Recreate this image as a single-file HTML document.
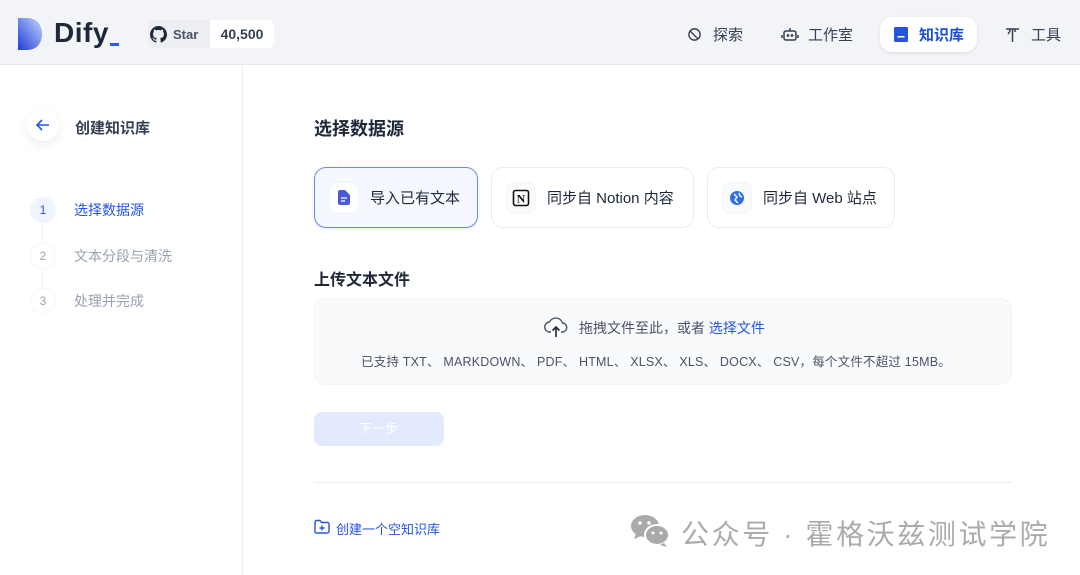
<!DOCTYPE html>
<html><head><meta charset="utf-8"><style>
*{margin:0;padding:0;box-sizing:border-box}
body{width:1080px;height:575px;overflow:hidden;background:#fff;font-family:"Liberation Sans","Noto Sans CJK SC",sans-serif;color:#1d2939;position:relative}
.a{position:absolute}
.hdr{left:0;top:0;width:1080px;height:65px;background:#f2f4f7;border-bottom:1px solid #e4e7ec}
.nav{top:18px;height:33px;font-size:15px;color:#344054;display:flex;align-items:center;gap:8px}
.side{left:0;top:66px;width:243px;height:509px;border-right:1px solid #eaecf0;background:#fff}
.step{left:30px;font-size:14px;color:#98a2b3;display:flex;align-items:center}
.num{width:26px;height:26px;border-radius:13px;border:1px solid #f5f6f8;display:flex;align-items:center;justify-content:center;font-size:12px;margin-right:18px;background:#fff}
.card{top:167px;height:61px;border:1px solid #eaecf0;border-radius:12px;display:flex;align-items:center;font-size:15px;color:#1d2939;background:#fff}
.ic{width:30px;height:32px;border-radius:8px;border:1px solid #f2f4f7;background:#f9fafb;margin:0 11px 0 14px;display:flex;align-items:center;justify-content:center}
</style></head><body>
<div class="a hdr"></div>
<svg class="a" style="left:18px;top:18px" width="24" height="32" viewBox="0 0 24 32"><defs><linearGradient id="g" x1="0" y1="1" x2="1" y2="0"><stop offset="0" stop-color="#1e3fd8"/><stop offset="1" stop-color="#c7d4fb"/></linearGradient></defs><path d="M0 0H9C18 0 24 6 24 16C24 26 18 32 9 32H0Z" fill="url(#g)"/></svg>
<div class="a" style="left:54px;top:17px;font-size:28px;font-weight:bold;color:#1d2939;letter-spacing:0.5px">Dify</div>
<div class="a" style="left:110px;top:43px;width:9px;height:3px;background:#2f5bea"></div>
<div class="a" style="left:148px;top:20px;width:126px;height:28px;border-radius:6px;background:#eceef2"></div>
<div class="a" style="left:210px;top:20px;width:64px;height:28px;border-radius:0 6px 6px 0;background:#fff;font-size:14px;font-weight:bold;color:#344054;text-align:center;line-height:28px">40,500</div>
<svg class="a" style="left:150px;top:26px" width="17" height="17" viewBox="0 0 16 16"><path fill="#1d2939" d="M8 0C3.6 0 0 3.6 0 8c0 3.5 2.3 6.5 5.5 7.6.4.1.5-.2.5-.4v-1.4c-2.2.5-2.7-1-2.7-1-.4-.9-.9-1.200-.9-1.2-.7-.5.1-.5.1-.5.8.1 1.2.8 1.2.8.7 1.3 1.9.9 2.3.7.1-.5.3-.9.5-1.1-1.8-.2-3.6-.9-3.6-4 0-.9.3-1.6.8-2.1-.1-.2-.4-1 .1-2.1 0 0 .7-.2 2.2.8.6-.2 1.3-.3 2-.3s1.4.1 2 .3c1.5-1 2.2-.8 2.2-.8.4 1.1.2 1.9.1 2.1.5.6.8 1.3.8 2.1 0 3.1-1.9 3.7-3.6 3.9.3.3.5.8.5 1.5v2.2c0 .2.1.5.6.4C13.7 14.5 16 11.5 16 8c0-4.4-3.6-8-8-8z"/></svg>
<div class="a" style="left:173px;top:27px;font-size:13px;font-weight:bold;color:#475467">Star</div>

<div class="a nav" style="left:687px"><svg width="15" height="15" viewBox="0 0 16 16" fill="none" stroke="#344054" stroke-width="1.5"><circle cx="8" cy="8" r="6"/><path d="M3 4L12 13"/></svg><span style="margin-left:3px">探索</span></div>
<div class="a nav" style="left:781px"><svg width="18" height="15" viewBox="0 0 18 15" fill="none" stroke="#344054" stroke-width="1.5"><rect x="3" y="4" width="12" height="9" rx="2"/><path d="M9 1v3M1 8v3M17 8v3"/><circle cx="7" cy="8.5" r=".6" fill="#344054"/><circle cx="11" cy="8.5" r=".6" fill="#344054"/></svg><span style="margin-left:1px">工作室</span></div>
<div class="a" style="left:880px;top:17px;width:97px;height:35px;border-radius:12px;background:#fff;box-shadow:0 1px 3px rgba(16,24,40,.1)"></div>
<div class="a nav" style="left:894px;color:#1d4ed8;font-weight:bold"><svg width="14" height="15" viewBox="0 0 14 15"><rect x="0" y="0" width="14" height="15" rx="1.5" fill="#2554e0"/><rect x="3.5" y="9" width="7" height="1.5" fill="#fff"/></svg><span style="margin-left:3px">知识库</span></div>
<div class="a nav" style="left:1005px"><svg width="15" height="16" viewBox="0 0 15 16" fill="none" stroke="#344054" stroke-width="1.5"><path d="M1 2h13M7.5 2v13M5 2c0 3 -1 4 -2 5M10 2v3"/></svg><span style="margin-left:3px">工具</span></div>

<div class="a side"></div>
<div class="a" style="left:27px;top:109px;width:32px;height:32px;border-radius:16px;background:#fff;box-shadow:0 4px 10px rgba(16,24,40,.08)"></div>
<svg class="a" style="left:35px;top:118px" width="16" height="14" viewBox="0 0 16 14" fill="none" stroke="#2554e0" stroke-width="1.6"><path d="M14 7H2M7 2L2 7l5 5"/></svg>
<div class="a" style="left:75px;top:117px;font-size:15px;font-weight:bold;color:#344054">创建知识库</div>
<div class="a" style="left:42px;top:222px;width:1px;height:90px;background:#eef0f3"></div>
<div class="a step" style="top:197px;color:#2554e0"><div class="num" style="background:#eff4ff;border-color:#eff4ff;color:#2554e0">1</div>选择数据源</div>
<div class="a step" style="top:243px"><div class="num">2</div>文本分段与清洗</div>
<div class="a step" style="top:288px"><div class="num">3</div>处理并完成</div>

<div class="a" style="left:314px;top:115px;font-size:18px;font-weight:bold;color:#1d2939">选择数据源</div>
<div class="a card" style="left:314px;width:164px;border:1.5px solid #6b8fe8;background:#f5f8ff;box-shadow:0 1px 3px rgba(16,24,40,.1)"><div class="ic" style="background:#fff"><svg width="12" height="15" viewBox="0 0 12 15"><path d="M0 2a2 2 0 012-2h5l5 5v8a2 2 0 01-2 2H2a2 2 0 01-2-2z" fill="#4d5ad8"/><path d="M3 8h6M3 11h4" stroke="#fff" stroke-width="1.2"/></svg></div>导入已有文本</div>
<div class="a card" style="left:491px;width:203px"><div class="ic"><svg width="18" height="18" viewBox="0 0 18 18"><rect x="1.5" y="1.5" width="15" height="15" rx="2" fill="#fff" stroke="#111" stroke-width="1.6"/><text x="9" y="13.5" font-family="Liberation Serif" font-weight="bold" font-size="12" text-anchor="middle" fill="#111">N</text></svg></div>同步自 Notion 内容</div>
<div class="a card" style="left:707px;width:188px"><div class="ic"><svg width="16" height="16" viewBox="0 0 16 16"><circle cx="8" cy="8" r="7" fill="#2f6fe6"/><path d="M5 4l3 3-2 3 3 3M10 3l1 3 2 1" stroke="#fff" stroke-width="1.4" fill="none"/></svg></div>同步自 Web 站点</div>

<div class="a" style="left:314px;top:266px;font-size:16px;font-weight:bold;color:#1d2939">上传文本文件</div>
<div class="a" style="left:314px;top:298px;width:698px;height:87px;border:1px solid #f2f4f7;border-radius:12px;background:#f9fafb"></div>
<svg class="a" style="left:544px;top:316px" width="24" height="22" viewBox="0 0 24 22" fill="none" stroke="#475467" stroke-width="1.4"><path d="M7 16H6a5 5 0 01-.5-10A7 7 0 0118.5 7 4.5 4.5 0 0118 16h-1"/><path d="M12 21V11M8.5 14.5L12 11l3.5 3.5" stroke="#1d2939" stroke-width="1.6"/></svg>
<div class="a" style="left:579px;top:318px;font-size:14px;color:#475467">拖拽文件至此，或者 <span style="color:#2554e0">选择文件</span></div>
<div class="a" style="left:361px;top:351px;font-size:12.5px;color:#475467;letter-spacing:0.2px">已支持 TXT、 MARKDOWN、 PDF、 HTML、 XLSX、 XLS、 DOCX、 CSV，每个文件不超过 15MB。</div>
<div class="a" style="left:314px;top:412px;width:130px;height:34px;border-radius:8px;background:#e4eafd;color:#fff;font-size:13px;line-height:34px;padding-left:45px">下一步</div>
<div class="a" style="left:314px;top:482px;width:698px;height:1px;background:#eaecf0"></div>
<svg class="a" style="left:314px;top:519px" width="16" height="15" viewBox="0 0 16 15" fill="none" stroke="#2554e0" stroke-width="1.4"><path d="M1 3a1.5 1.5 0 011.5-1.5h3.5l1.5 2h6A1.5 1.5 0 0115 5v7.5a1.5 1.5 0 01-1.5 1.5h-11A1.5 1.5 0 011 12.5z"/><path d="M8 6.5v5M5.5 9h5"/></svg>
<div class="a" style="left:336px;top:519px;font-size:13px;color:#2554e0">创建一个空知识库</div>

<svg class="a" style="left:630px;top:514px" width="42" height="34" viewBox="0 0 42 34"><ellipse cx="15" cy="12" rx="14" ry="11" fill="#aaa"/><path d="M6 20l-2 5 7-3z" fill="#aaa"/><ellipse cx="27" cy="21" rx="12" ry="10" fill="#aaa" stroke="#fff" stroke-width="2"/><path d="M34 29l3 4-7-2z" fill="#aaa"/><circle cx="10" cy="9" r="1.8" fill="#fff"/><circle cx="19" cy="9" r="1.8" fill="#fff"/><circle cx="23" cy="19" r="1.5" fill="#fff"/><circle cx="31" cy="19" r="1.5" fill="#fff"/></svg>
<div class="a" style="left:681px;top:513px;font-size:28px;color:#ababab;letter-spacing:2.6px">公众号 · 霍格沃兹测试学院</div>
</body></html>
